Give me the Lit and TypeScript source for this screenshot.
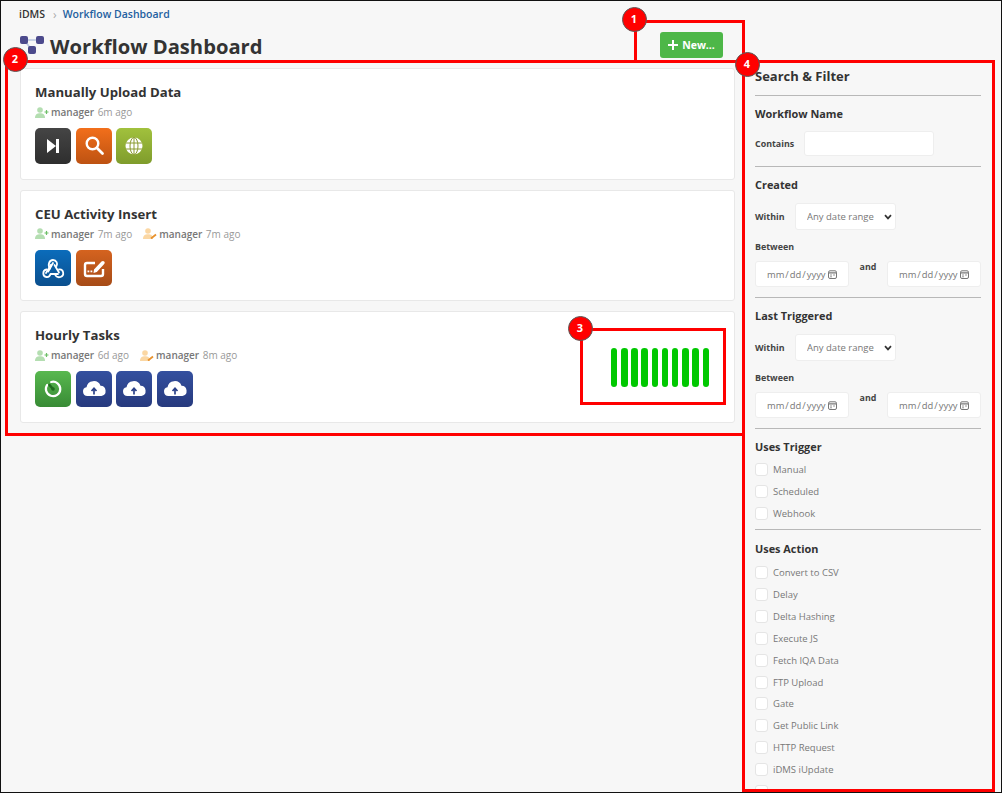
import { LitElement, html, css, svg } from "lit";
import { customElement } from "lit/decorators.js";

const icons: Record<string, unknown> = {
  next: svg`<path d="M12 11 L21 18 L12 25Z" fill="#fff"/><rect x="21" y="11" width="3" height="14" fill="#fff"/>`,
  search: svg`<circle cx="16.5" cy="15.5" r="5.8" fill="none" stroke="#fff" stroke-width="2.4"/><path d="M21 20 L26.5 25.5" stroke="#fff" stroke-width="2.8" stroke-linecap="round"/>`,
  globe: svg`<circle cx="18" cy="18" r="8.5" fill="#fff"/><g fill="none" stroke="#8a9a30" stroke-width="1"><ellipse cx="18" cy="18" rx="4" ry="8.5"/><path d="M18 9.5V26.5M10 15H26M10 21H26"/></g>`,
  webhook: svg`<g fill="none" stroke="#fff" stroke-width="1.8" stroke-linecap="round" stroke-linejoin="round"><path d="M15 18.5 C12.5 15.5 14 10 18 10 C21.5 10 23 13.5 21.5 16"/><path d="M18 13 L13.2 21.5"/><path d="M16 14.8 L11 23"/><path d="M11.5 19.5 C7.5 20 7 26.5 11.5 27 C13.5 27.2 15 26 15.5 24 L23 24"/><path d="M19.5 15 L24 22.5"/><path d="M24 19.5 C28.5 18.8 30 25.5 25.5 27 C23.5 27.6 21.5 26.8 20.5 25.5"/></g>`,
  edit: svg`<path d="M19 13H11a2 2 0 0 0-2 2V24a2 2 0 0 0 2 2H25a2 2 0 0 0 2-2V19" fill="none" stroke="#fff" stroke-width="2.4"/><path d="M18 19.5 L25.5 11.5 Q27 10.3 28.2 11.5 Q29.4 12.8 28.2 14 L20.8 22 L17.5 23Z" fill="#fff"/><g fill="#fff"><rect x="11.5" y="20.5" width="1.8" height="1.8"/><rect x="14.5" y="20.5" width="1.8" height="1.8"/></g>`,
  timer: svg`<path d="M16.2 11 A7.2 7.2 0 1 1 12.2 13.8" fill="none" stroke="#fff" stroke-width="2.2" stroke-linecap="round"/><path d="M14.4 13.9 L18 18" stroke="#1f6a1f" stroke-width="2.4" stroke-linecap="round"/><circle cx="18" cy="18" r="1.8" fill="#1f6a1f"/>`,
  cloud: svg`<path d="M11.5 25a4.4 4.4 0 0 1-1-8.7 7.3 7.3 0 0 1 14-1.6 5.2 5.2 0 0 1 .9 10.3Z" fill="#fff"/><path d="M18 23.5V18M15.5 20 18 17.3 20.5 20" fill="none" stroke="#2b4189" stroke-width="1.7"/>`,
};

const tileClass: Record<string, string> = {
  next: "dark", search: "orange", globe: "lime", webhook: "blue", edit: "rust", timer: "green", cloud: "navy",
};

interface Stamp { kind: "add" | "edit"; who: string; when: string }
interface Flow { name: string; stamps: Stamp[]; tiles: string[]; runs: number }

const flows: Flow[] = [
  { name: "Manually Upload Data", stamps: [{ kind: "add", who: "manager", when: "6m ago" }], tiles: ["next", "search", "globe"], runs: 0 },
  { name: "CEU Activity Insert", stamps: [{ kind: "add", who: "manager", when: "7m ago" }, { kind: "edit", who: "manager", when: "7m ago" }], tiles: ["webhook", "edit"], runs: 0 },
  { name: "Hourly Tasks", stamps: [{ kind: "add", who: "manager", when: "6d ago" }, { kind: "edit", who: "manager", when: "8m ago" }], tiles: ["timer", "cloud", "cloud", "cloud"], runs: 10 },
];

const triggers = ["Manual", "Scheduled", "Webhook"];
const actions = ["Convert to CSV", "Delay", "Delta Hashing", "Execute JS", "Fetch IQA Data", "FTP Upload", "Gate", "Get Public Link", "HTTP Request", "iDMS iUpdate"];

@customElement("app-root")
export class AppRoot extends LitElement {
  static styles = css`
    :host { display: block; width: 1003px; height: 793px; overflow: hidden; font-family: "Open Sans", sans-serif; color: #333; }
    * { box-sizing: border-box; }
    .frame { position: relative; width: 1002px; height: 793px; overflow: hidden; background: #f7f7f7; border: 1px solid #111; padding: 0 21px 0 19px; display: grid; grid-template-columns: 715px 226px; column-gap: 20px; align-items: start; }
    .crumbs { height: 14px; margin: 6px 0 0 -1px; display: flex; align-items: center; font-size: 10.5px; font-weight: 600; }
    .crumbs .sep { color: #aaa; margin: 0 6px 0 8px; font-size: 12px; font-weight: 400; }
    .crumbs .link { color: #23609f; }
    .head { display: flex; align-items: center; justify-content: space-between; height: 26px; margin-top: 11px; padding-right: 12px; }
    .title { display: flex; align-items: center; gap: 6px; }
    .title h1 { margin: 2px 0 0; font-size: 20.2px; line-height: 26px; font-weight: 700; color: #333; white-space: nowrap; }
    .new { width: 63px; height: 26px; display: flex; align-items: center; justify-content: center; gap: 4px; background: #4db748; color: #fff; border-radius: 3px; font-size: 10.5px; font-weight: 700; }
    .cards { display: flex; flex-direction: column; gap: 10px; margin-top: 10px; }
    .card { height: 111.5px; background: #fff; border: 1px solid #e8e8e8; border-radius: 3px; padding: 13px 15px 0 14px; display: flex; justify-content: space-between; }
    .card h2 { margin: 0; font-size: 13.2px; line-height: 20px; font-weight: 700; color: #333; }
    .meta { display: flex; gap: 11px; height: 16px; margin-top: 2px; font-size: 10px; line-height: 16px; color: #999; }
    .stamp { display: flex; align-items: center; gap: 2px; }
    .stamp b { font-weight: 600; color: #777; margin-right: 1.5px; }
    .tiles { display: flex; gap: 4.5px; margin-top: 8px; }
    .tile { width: 36px; height: 36px; border-radius: 5px; display: block; }
    .dark { background: linear-gradient(#454545, #2e2e2e); }
    .orange { background: linear-gradient(#f26f1b, #bd5212); }
    .lime { background: linear-gradient(#a1c13d, #7f9c2c); }
    .blue { background: linear-gradient(#0b6cbb, #0b4f8e); }
    .rust { background: linear-gradient(#d5631f, #a64b17); }
    .green { background: linear-gradient(#58b84f, #388b35); }
    .navy { background: linear-gradient(#34509f, #273a7e); }
    .runs { display: flex; gap: 3.7px; margin: 23px 10px 0 0; }
    .runs i { width: 6.5px; height: 39px; border-radius: 3.3px; background: #00c800; }
    aside { padding-top: 65px; font-size: 10px; }
    aside h3 { margin: 0; font-size: 13px; line-height: 20px; font-weight: 700; color: #333; }
    aside h4 { margin: 0; font-size: 10.9px; line-height: 16px; font-weight: 700; color: #333; }
    .section { border-top: 1px solid #b8b8b8; padding: 10px 0; }
    .section.first { margin-top: 9px; }
    .tight { padding-bottom: 4px; }
    .row { display: flex; align-items: center; margin-top: 9px; }
    label.key { font-size: 8.9px; font-weight: 700; color: #444; }
    .key.wide { width: 49px; }
    .key.mid { width: 40px; }
    .contains { width: 130px; height: 25px; background: #fff; border: 1px solid #eee; border-radius: 3px; }
    select { appearance: none; -webkit-appearance: none; width: 101px; height: 27px; background: #fff url("data:image/svg+xml,%3Csvg xmlns='http://www.w3.org/2000/svg' width='8' height='6' viewBox='0 0 8 6'%3E%3Cpath d='M1 1.2 4 4.4 7 1.2' fill='none' stroke='%23333' stroke-width='1.7'/%3E%3C/svg%3E") no-repeat right 3px center; border: 1px solid #eee; border-radius: 3px; font: 400 9.5px "Open Sans", sans-serif; color: #777; padding-left: 11px; outline: none; }
    .within { margin-top: 10px; }
    .between { margin-top: 10px; line-height: 12px; }
    .dates { display: flex; justify-content: space-between; margin-top: 8px; }
    .dates span.and { font-size: 8.9px; font-weight: 700; color: #444; line-height: 12px; }
    input[type="date"] { width: 94px; height: 26px; background: #fff; border: 1px solid #eee; border-radius: 3px; font: 400 9.4px "Open Sans", sans-serif; color: #777; padding: 0 11px 0 10px; outline: none; }
    input[type="date"]::-webkit-calendar-picker-indicator { width: 9px; height: 9px; margin: 0; padding: 0; opacity: 1; background: url("data:image/svg+xml,%3Csvg xmlns='http://www.w3.org/2000/svg' width='9' height='9' viewBox='0 0 9 9'%3E%3Crect x='.5' y='.8' width='8' height='7.7' rx='1.5' fill='none' stroke='%23777'/%3E%3Cpath d='M.5 2.8H8.5' stroke='%23777' stroke-width='1.2'/%3E%3Cpath d='M2 5H4M5 5H7M2 6.8H4' stroke='%23999'/%3E%3C/svg%3E") no-repeat center; }
    .checks { margin-top: 4px; }
    .checks.act { margin-top: 5px; }
    .check { height: 21.9px; display: flex; align-items: center; gap: 5px; font-size: 9.5px; color: #777; }
    .check i { width: 13px; height: 13px; background: #fff; border: 1px solid #e5e5e5; border-radius: 3px; flex: none; }
    .action-head { padding-top: 11px; }
    .mark { position: absolute; border: 3px solid #f00; pointer-events: none; }
    .mark.one { left: 633px; top: 18.5px; width: 111px; height: 42px; border-bottom: 0; }
    .mark.two { left: 4px; top: 58.5px; width: 740px; height: 376px; }
    .mark.three { left: 579px; top: 327px; width: 146px; height: 77px; }
    .mark.four { left: 740.5px; top: 58.5px; width: 253px; height: 732px; }
    .dot { position: absolute; width: 25px; height: 25px; margin: -12.5px 0 0 -12.5px; border-radius: 50%; background: #f00; border: 1.5px solid #5a5a5a; color: #fff; font: 700 11px/22px "Open Sans", sans-serif; text-align: center; }
    .d1 { left: 633px; top: 18px; }
    .d2 { left: 14px; top: 58px; }
    .d3 { left: 579px; top: 327px; }
    .d4 { left: 746px; top: 63px; }
  `;

  private tile(name: string) {
    return html`<svg class="tile ${tileClass[name]}" viewBox="0 0 36 36">${icons[name]}</svg>`;
  }

  private person(kind: "add" | "edit") {
    const c = kind === "add" ? "#b4deb1" : "#fbd7a3";
    const s = kind === "add" ? "#6cbf66" : "#e8912c";
    return html`<svg width="14" height="11" viewBox="0 0 14 11"><circle cx="5" cy="3" r="2.8" fill=${c}/><path d="M0 11c0-3.6 2-4.8 5-4.8s5 1.2 5 4.8Z" fill=${c}/>${kind === "add"
      ? svg`<path d="M11.5 3v4M9.5 5h4" stroke=${s} stroke-width="1.2"/>`
      : svg`<path d="M8 10.5 13 6.5" stroke=${s} stroke-width="1.8"/>`}</svg>`;
  }

  private dateBlock(title: string) {
    return html`<div class="section">
      <h4>${title}</h4>
      <div class="row within"><label class="key mid">Within</label><select><option>Any date range</option></select></div>
      <div class="between"><label class="key">Between</label></div>
      <div class="dates"><input type="date" /><span class="and">and</span><input type="date" /></div>
    </div>`;
  }

  render() {
    return html`<div class="frame">
      <main>
        <div class="crumbs"><span>iDMS</span><span class="sep">›</span><span class="link">Workflow Dashboard</span></div>
        <div class="head">
          <div class="title">
            <svg width="24" height="19" viewBox="1 0 24 19"><path d="M5 4H20M5 4 13 14" stroke="#b9c6e0" stroke-width="1.6"/><g fill="#4c4a8c"><rect x="1" y="0" width="8" height="8" rx="2"/><rect x="17" y="0" width="8" height="8" rx="2"/><rect x="9" y="10" width="8" height="8" rx="2"/></g></svg>
            <h1>Workflow Dashboard</h1>
          </div>
          <div class="new"><svg width="10" height="10" viewBox="0 0 10 10"><path d="M5 0V10M0 5H10" stroke="#fff" stroke-width="2"/></svg>New...</div>
        </div>
        <div class="cards">
          ${flows.map((f) => html`<section class="card">
            <div>
              <h2>${f.name}</h2>
              <div class="meta">${f.stamps.map((s) => html`<span class="stamp">${this.person(s.kind)}<b>${s.who}</b>${s.when}</span>`)}</div>
              <div class="tiles">${f.tiles.map((t) => this.tile(t))}</div>
            </div>
            ${f.runs ? html`<div class="runs">${Array.from({ length: f.runs }, () => html`<i></i>`)}</div>` : null}
          </section>`)}
        </div>
      </main>
      <aside>
        <h3>Search &amp; Filter</h3>
        <div class="section first">
          <h4>Workflow Name</h4>
          <div class="row"><label class="key wide">Contains</label><div class="contains"></div></div>
        </div>
        ${this.dateBlock("Created")}
        ${this.dateBlock("Last Triggered")}
        <div class="section tight">
          <h4>Uses Trigger</h4>
          <div class="checks">${triggers.map((t) => html`<div class="check"><i></i>${t}</div>`)}</div>
        </div>
        <div class="section action-head">
          <h4>Uses Action</h4>
          <div class="checks act">${actions.map((t) => html`<div class="check"><i></i>${t}</div>`)}<div class="check"><i></i></div></div>
        </div>
      </aside>
      <div class="mark one"></div>
      <div class="mark two"></div>
      <div class="mark three"></div>
      <div class="mark four"></div>
      <div class="dot d1">1</div>
      <div class="dot d2">2</div>
      <div class="dot d3">3</div>
      <div class="dot d4">4</div>
    </div>`;
  }
}
